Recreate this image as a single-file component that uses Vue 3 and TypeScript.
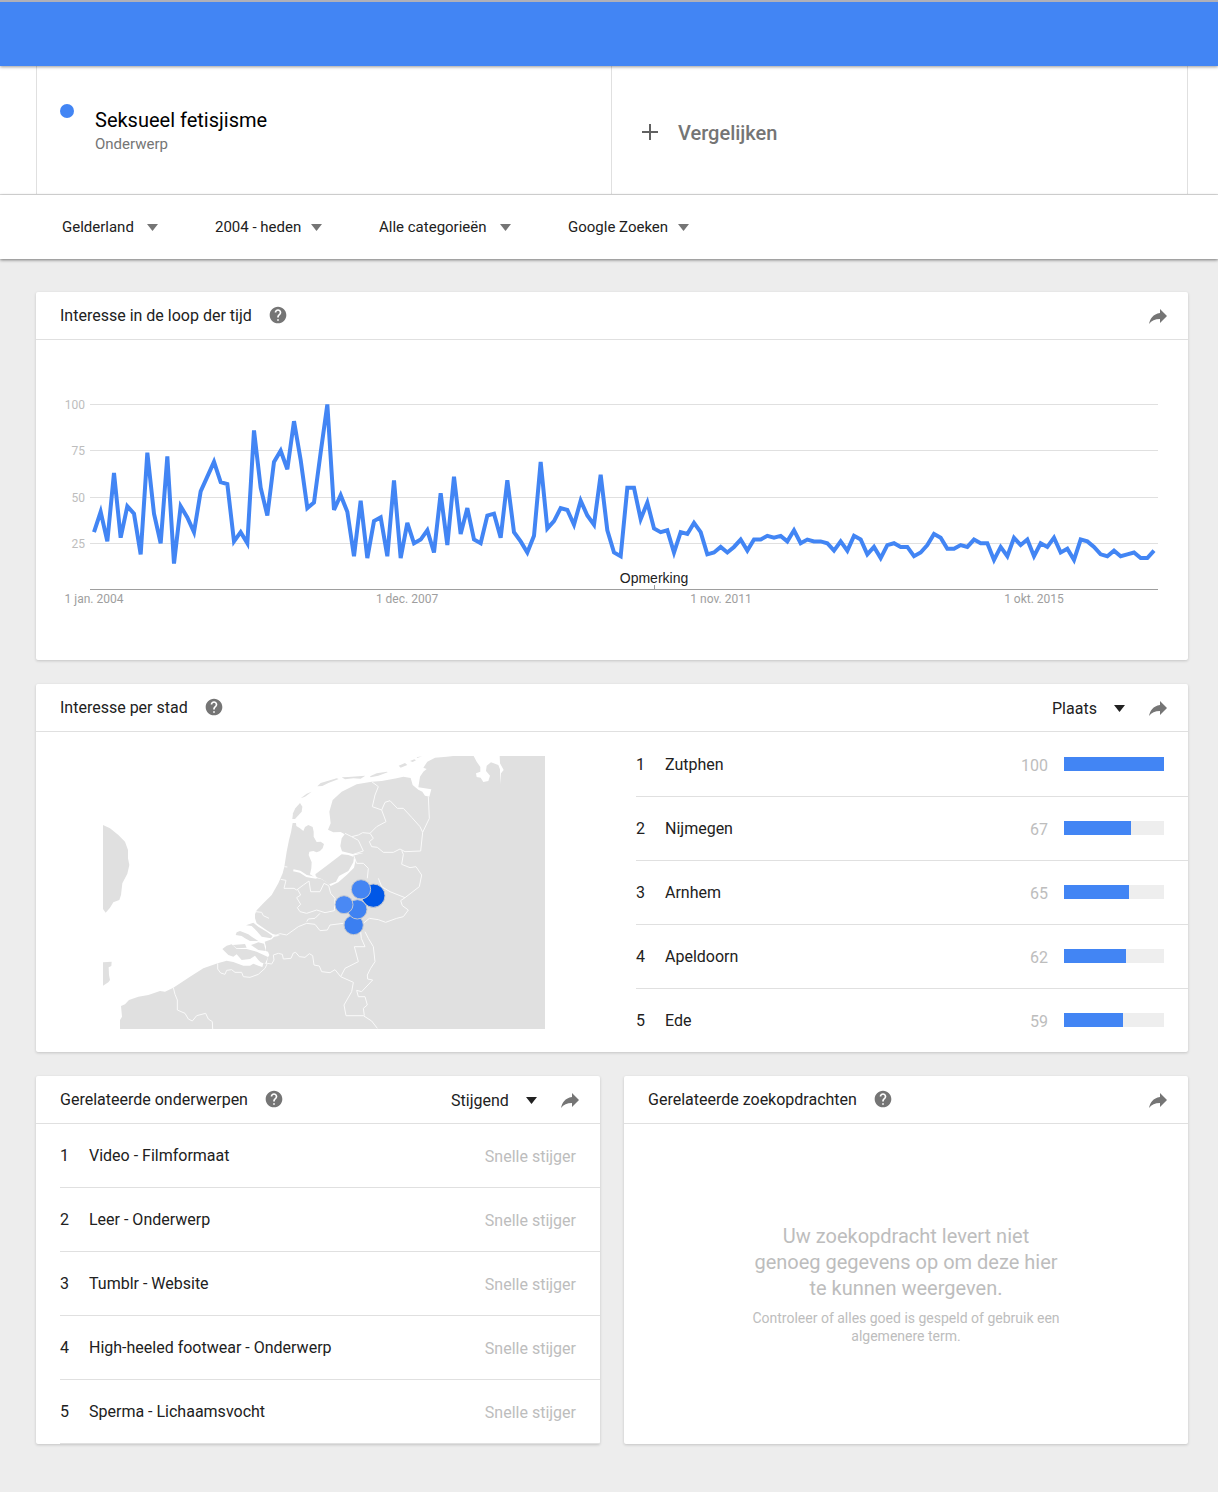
<script setup lang="ts">
interface Filter { name: string; value: string; wide: boolean }
interface Row { label: string; value: number }
interface Bubble { city: string; x: number; y: number; r: number; fill: string }

const filters: Filter[] = [
  { name: 'Regio', value: 'Gelderland', wide: true },
  { name: 'Periode', value: '2004 - heden', wide: false },
  { name: 'Categorie', value: 'Alle categorieën', wide: true },
  { name: 'Zoektype', value: 'Google Zoeken', wide: false },
]

const cities: Row[] = [
  { label: 'Zutphen', value: 100 },
  { label: 'Nijmegen', value: 67 },
  { label: 'Arnhem', value: 65 },
  { label: 'Apeldoorn', value: 62 },
  { label: 'Ede', value: 59 },
]

const topics: string[] = [
  'Video - Filmformaat',
  'Leer - Onderwerp',
  'Tumblr - Website',
  'High-heeled footwear - Onderwerp',
  'Sperma - Lichaamsvocht',
]

// Monthly interest, from January 2004
const interest: number[] = [
  31, 42, 26, 63, 28, 45, 41, 19, 74, 41, 25, 72, 14, 45, 39, 31, 53, 61, 69, 58,
  57, 26, 31, 25, 86, 55, 40, 69, 75, 65, 91, 70, 44, 47, 74, 100, 43, 51, 42, 18,
  48, 17, 37, 39, 18, 59, 17, 36, 25, 27, 32, 20, 52, 24, 61, 30, 44, 27, 25, 40,
  41, 28, 59, 31, 26, 20, 29, 69, 33, 37, 44, 43, 35, 48, 40, 35, 62, 32, 20, 18,
  55, 55, 38, 47, 33, 31, 32, 20, 31, 30, 36, 31, 19, 20, 23, 20, 23, 27, 21, 27,
  27, 29, 28, 29, 26, 32, 25, 27, 26, 26, 25, 21, 26, 21, 29, 27, 19, 23, 17, 24,
  25, 23, 23, 18, 20, 24, 30, 28, 22, 22, 24, 23, 27, 25, 25, 16, 23, 18, 28, 24,
  27, 18, 25, 23, 28, 20, 22, 16, 27, 26, 23, 19, 18, 21, 18, 19, 20, 17, 17, 21,
]
const points = interest
  .map((v, i) => `${(58 + (i * 20) / 3).toFixed(2)},${(249.5 - v * 1.85).toFixed(2)}`)
  .join(' ')

const gridLines = [
  { label: '100', y: 64 },
  { label: '75', y: 110 },
  { label: '50', y: 157 },
  { label: '25', y: 203 },
]
const dates = [
  { label: '1 jan. 2004', x: 58 },
  { label: '1 dec. 2007', x: 371 },
  { label: '1 nov. 2011', x: 685 },
  { label: '1 okt. 2015', x: 998 },
]

const bubbles: Bubble[] = [
  { city: 'Zutphen', x: 850, y: 452, r: 35, fill: '#0057e7' },
  { city: 'Nijmegen', x: 791, y: 540, r: 29, fill: '#3b7ff1' },
  { city: 'Arnhem', x: 802, y: 493, r: 29, fill: '#3f82f2' },
  { city: 'Apeldoorn', x: 813, y: 433, r: 29, fill: '#4485f3' },
  { city: 'Ede', x: 762, y: 479, r: 27, fill: '#4a89f4' },
]

const helpPath =
  'M12 2C6.48 2 2 6.48 2 12s4.48 10 10 10 10-4.48 10-10S17.52 2 12 2zm1 17h-2v-2h2v2zm2.07-7.75l-.9.92C13.45 12.9 13 13.5 13 15h-2v-.5c0-1.1.45-2.1 1.17-2.83l1.24-1.26c.37-.36.59-.86.59-1.41 0-1.1-.9-2-2-2s-2 .9-2 2H8c0-2.21 1.79-4 4-4s4 1.79 4 4c0 .88-.36 1.68-.93 2.25z'
const sharePath = 'M14 9V5l7 7-7 7v-4.1c-5 0-8.5 1.6-11 5.1 1-5 4-10 11-11z'
</script>

<template>
  <div class="page">
    <header class="app-bar"></header>

    <section class="terms">
      <div class="term">
        <span class="dot"></span>
        <div class="term-text">
          <h1>Seksueel fetisjisme</h1>
          <p>Onderwerp</p>
        </div>
      </div>
      <button type="button" class="term compare">
        <svg viewBox="0 0 24 24" aria-hidden="true"><path d="M20 13h-7v7h-2v-7H4v-2h7V4h2v7h7z" /></svg>
        <span>Vergelijken</span>
      </button>
    </section>

    <nav class="filters" aria-label="Filters">
      <label v-for="f in filters" :key="f.name" class="picker" :class="{ wide: f.wide }">
        <select :aria-label="f.name"><option>{{ f.value }}</option></select>
        <svg viewBox="0 0 11 7" aria-hidden="true"><path d="M0 0h11L5.500 7z" /></svg>
      </label>
    </nav>

    <main class="content">
      <section class="card">
        <div class="card-head">
          <h2>Interesse in de loop der tijd</h2>
          <button type="button" class="help" aria-label="Help"><svg viewBox="0 0 24 24"><path :d="helpPath" /></svg></button>
          <button type="button" class="share" aria-label="Delen"><svg viewBox="0 0 24 24"><path :d="sharePath" /></svg></button>
        </div>
        <svg class="chart" viewBox="0 0 1152 320" role="img" aria-label="Interesse in de loop der tijd">
          <g v-for="g in gridLines" :key="g.label">
            <rect class="grid" x="54" :y="g.y" width="1068" height="1" />
            <text class="axis-y" x="49" :y="g.y + 5">{{ g.label }}</text>
          </g>
          <rect class="base" x="54" y="249" width="1068" height="1" />
          <rect class="base" x="618" y="245" width="1" height="4" />
          <polyline :points="points" />
          <text class="note" x="618" y="243">Opmerking</text>
          <text v-for="d in dates" :key="d.label" class="axis-x" :x="d.x" y="263">{{ d.label }}</text>
        </svg>
      </section>

      <section class="card">
        <div class="card-head">
          <h2>Interesse per stad</h2>
          <button type="button" class="help" aria-label="Help"><svg viewBox="0 0 24 24"><path :d="helpPath" /></svg></button>
          <label class="picker dark">
            <select aria-label="Weergave"><option>Plaats</option></select>
            <svg viewBox="0 0 11 7" aria-hidden="true"><path d="M0 0h11L5.500 7z" /></svg>
          </label>
          <button type="button" class="share" aria-label="Delen"><svg viewBox="0 0 24 24"><path :d="sharePath" /></svg></button>
        </div>
        <div class="split">
          <div class="map-wrap">
            <svg class="map" viewBox="39 33 1326 819" role="img" aria-label="Kaart van Nederland">
              <g class="land">
                <path d="M90 852 90 825 96 815 93 783 105 778 117 765 145 755 175 750 210 738 225 740 250 728 300 695 340 670 383 655 410 647 430 651 460 662 480 662 490 656 505 662 517 666 520 655 530 657 533 638 538 630 534 620 527 618 528 605 524 590 545 583 552 575 570 572 548 567 530 556 515 545 500 535 495 520 495 508 500 496 520 475 545 450 565 415 578 385 583 365 590 320 597 285 603 262 608 234 618 234 619 243 630 250 640 258 645 246 655 240 668 246 671 260 671 275 680 291 692 290 702 297 698 310 690 318 680 322 670 318 658 320 656 330 665 352 664 370 660 388 676 398 695 403 715 415 722 423 745 412 770 390 792 368 797 345 788 332 820 324 788 327 756 319 751 303 755 280 764 268 752 261 730 262 714 254 722 235 718 200 728 165 755 140 800 118 845 110 875 108 920 100 940 95 962 99 968 120 985 134 997 140 1005 152 1018 155 1024 133 985 127 990 95 1000 80 1010 72 1000 68 1012 50 1035 38 1070 35 1090 33 1151 33 1160 50 1171 66 1171 80 1158 85 1160 96 1172 98 1180 111 1195 108 1200 92 1188 78 1190 62 1203 52 1225 60 1230 73 1231 118 1233 85 1241 75 1230 55 1229 33 1365 33 1365 852Z" />
                <path d="M39 240 60 250 85 270 105 290 114 315 114 340 118 360 112 386 97 415 93 450 88 465 70 472 60 488 47 503 39 492Z" />
                <path d="M39 652 65 650 64 663 56 667 57 690 60 705 55 712 39 722Z" />
                <path d="M609 205 616 190 630 174 637 185 635 200 615 222 607 222Z" />
                <path d="M632 160 650 146 665 140 645 155Z" />
                <path d="M682 124 692 114 720 106 740 100 746 102 715 114 697 123Z" />
                <path d="M755 97 775 96 826 92 812 101 790 100 765 103Z" />
                <path d="M840 94 860 85 891 80 893 82 865 92 842 97Z" />
                <path d="M926 62 945 54 952 60 932 68ZM960 48 973 43 978 46 968 51ZM980 37 996 34 982 39Z" />
                <path d="M676 388 710 362 755 328 775 330 792 336 790 352 775 378 747 393 738 410 718 418 695 402 678 396Z" />
                <path d="M468 541 490 533 505 545 530 560 548 573 543 580 515 575 500 558 485 543Z" />
                <path d="M437 570 440 562 450 558 475 568 485 575 505 588 480 588 465 580 455 573Z" />
                <path d="M428 600 465 597 470 608 440 610Z" />
                <path d="M397 612 410 602 425 598 440 612 470 612 500 620 534 636 525 657 512 652 505 645 495 632 480 642 455 645 440 628 430 635 415 630Z" />
                <path d="M483 600 505 592 522 596 527 618 505 615Z" />
              </g>
              <g class="borders">
                <path d="M383 655 383 672 392 684 405 688 410 676 425 674 435 682 455 682 460 695 480 697 505 688 525 670 532 655 545 657 552 645 550 630 565 625 577 628 580 642 603 640 610 624 617 622 628 635 645 637 658 626 668 632 672 660 688 663 695 680 720 683 735 674 752 695 790 712 785 740 762 780 768 812 820 812 845 828 862 850" />
                <path d="M250 728 255 748 262 765 262 795 285 805 295 822 307 828 320 812 347 805 355 822 367 830 368 852" />
                <path d="M572 403 588 406 582 430 612 430 620 435 640 420 657 408 662 440 690 440 702 415 716 422 722 445 735 460 733 497 705 503 680 495 650 505 630 500 622 488 632 478 620 458 632 450 622 432" />
                <path d="M552 573 570 566 590 570 625 545 650 535 675 538 690 557 712 555 720 540 760 535M650 530 655 522 675 520 690 505M497 500 515 502 520 512 537 520M583 365 592 366" />
                <path d="M845 110 865 125 855 150 847 185 875 195 888 230 860 245 840 265 818 263 805 270 785 275 765 265" />
                <path d="M875 195 885 172 900 167 922 190 940 190 965 217 990 245 998 262 1018 220 1015 155" />
                <path d="M840 265 850 280 838 290 845 305 862 307 880 322 910 322 930 312 945 320 992 318 998 262" />
                <path d="M935 316 940 328 935 358 960 368 978 365 995 390 988 425 945 458 900 440 875 425 865 400" />
                <path d="M785 275 805 286 820 318 790 328 800 355 820 355 835 370 832 400" />
                <path d="M945 458 932 467 937 482 955 495 940 515 920 520 887 532 865 524 838 520 820 535" />
                <path d="M812 560 814 580 825 605 793 605 805 650 765 670 752 695M825 560 835 580 850 605 855 650 842 670 832 690 833 702 848 705 815 740 800 736 805 755 825 755 832 780 820 790 823 812" />
              </g>
              <path class="water" d="M610 376 630 380 650 393 665 396 680 398" />
              <circle v-for="b in bubbles" :key="b.city" :cx="b.x" :cy="b.y" :r="b.r" :fill="b.fill" />
            </svg>
          </div>
          <ol class="list cities">
            <li v-for="(c, i) in cities" :key="c.label">
              <span class="rank">{{ i + 1 }}</span>
              <span class="name">{{ c.label }}</span>
              <span class="value">{{ c.value }}</span>
              <span class="bar"><span class="fill" :style="{ width: c.value + '%' }"></span></span>
            </li>
          </ol>
        </div>
      </section>

      <div class="pair">
        <section class="card">
          <div class="card-head">
            <h2>Gerelateerde onderwerpen</h2>
            <button type="button" class="help" aria-label="Help"><svg viewBox="0 0 24 24"><path :d="helpPath" /></svg></button>
            <label class="picker dark">
              <select aria-label="Sortering"><option>Stijgend</option></select>
              <svg viewBox="0 0 11 7" aria-hidden="true"><path d="M0 0h11L5.500 7z" /></svg>
            </label>
            <button type="button" class="share" aria-label="Delen"><svg viewBox="0 0 24 24"><path :d="sharePath" /></svg></button>
          </div>
          <ol class="list topics">
            <li v-for="(t, i) in topics" :key="t">
              <span class="rank">{{ i + 1 }}</span>
              <span class="name">{{ t }}</span>
              <span class="value">Snelle stijger</span>
            </li>
          </ol>
        </section>

        <section class="card">
          <div class="card-head">
            <h2>Gerelateerde zoekopdrachten</h2>
            <button type="button" class="help" aria-label="Help"><svg viewBox="0 0 24 24"><path :d="helpPath" /></svg></button>
            <button type="button" class="share" aria-label="Delen"><svg viewBox="0 0 24 24"><path :d="sharePath" /></svg></button>
          </div>
          <div class="empty">
            <p class="empty-title">Uw zoekopdracht levert niet genoeg gegevens op om deze hier te kunnen weergeven.</p>
            <p class="empty-hint">Controleer of alles goed is gespeld of gebruik een algemenere term.</p>
          </div>
        </section>
      </div>
    </main>
  </div>
</template>

<style>
body {
  background: #ededed;
}
</style>

<style scoped>
.page {
  font-family: Roboto, "Liberation Sans", sans-serif;
  color: #212121;
  font-size: 16px;
}
h1, h2, p, ol {
  margin: 0;
  padding: 0;
  font-weight: 400;
}
button, select {
  font: inherit;
  color: inherit;
  background: none;
  border: 0;
  padding: 0;
  margin: 0;
  cursor: pointer;
}
svg {
  display: block;
}
.app-bar {
  position: relative;
  box-sizing: border-box;
  height: 66px;
  background: #4285f4;
  border-top: 2px solid #b0b0b8;
  box-shadow: 0 1px 3px rgba(0, 0, 0, 0.4);
}
.terms {
  display: grid;
  grid-template-columns: 1fr 1fr;
  height: 128px;
  padding: 0 30px 0 36px;
  background: #fff;
  border-bottom: 1px solid #e0e0e0;
}
.term {
  display: flex;
  align-items: flex-start;
  box-sizing: border-box;
  padding: 38px 24px 0 23px;
  border-left: 1px solid #e0e0e0;
  text-align: left;
}
.dot {
  width: 14px;
  height: 14px;
  margin-right: 21px;
  border-radius: 50%;
  background: #4285f4;
}
.term-text {
  padding-top: 4px;
}
h1 {
  font-size: 20px;
  line-height: 24px;
  color: #000;
}
.term-text p {
  font-size: 15px;
  line-height: 24px;
  color: #757575;
}
.compare {
  align-items: center;
  gap: 16px;
  margin-left: -1px;
  padding: 4px 24px 0 26px;
  border-right: 1px solid #e0e0e0;
  color: #757575;
  font-size: 20px;
  font-weight: 500;
}
.compare span {
  padding-top: 2px;
}
.compare svg {
  width: 24px;
  height: 24px;
  fill: #616161;
}
.filters {
  position: relative;
  display: flex;
  align-items: center;
  gap: 57px;
  height: 64px;
  padding: 0 62px;
  background: #fff;
  box-shadow: 0 1px 3px rgba(0, 0, 0, 0.5);
  font-size: 15px;
}
.picker {
  display: flex;
  align-items: center;
  gap: 9px;
}
.picker.wide {
  gap: 13px;
}
.picker select {
  appearance: none;
  line-height: 24px;
}
.picker svg {
  width: 11px;
  height: 7px;
  fill: #757575;
}
.picker.dark {
  gap: 17px;
  margin: 3px 21px 0 auto;
}
.picker.dark svg {
  margin-bottom: 1px;
  fill: #212121;
}
.content {
  display: flex;
  flex-direction: column;
  gap: 24px;
  padding: 33px 30px 48px 36px;
}
.card {
  background: #fff;
  border-radius: 2px;
  box-shadow: 0 1px 3px rgba(0, 0, 0, 0.18);
}
.card-head {
  display: flex;
  align-items: center;
  box-sizing: border-box;
  height: 48px;
  padding: 0 18px 0 24px;
  border-bottom: 1px solid #e0e0e0;
}
.help {
  margin: 0 0 1px 16px;
}
.help svg {
  width: 20px;
  height: 20px;
  fill: #757575;
}
.share svg {
  width: 24px;
  height: 24px;
  fill: #757575;
}
.help + .share {
  margin-left: auto;
}
h2 {
  padding-top: 1px;
  font-size: 16px;
  line-height: 24px;
}
.chart {
  width: 100%;
}
.chart polyline {
  fill: none;
  stroke: #4285f4;
  stroke-width: 4;
}
.grid {
  fill: #e0e0e0;
}
.base {
  fill: #9e9e9e;
}
.axis-y {
  font-size: 12px;
  text-anchor: end;
  fill: #bdbdbd;
}
.axis-x {
  font-size: 12px;
  text-anchor: middle;
  fill: #9e9e9e;
}
.note {
  font-family: "Liberation Sans", Arial, sans-serif;
  font-size: 14px;
  text-anchor: middle;
  fill: #222;
}
.split, .pair {
  display: grid;
  grid-template-columns: 1fr 1fr;
}
.pair {
  gap: 24px;
}
.map-wrap {
  padding: 24px 67px 23px;
}
.map {
  width: 100%;
}
.land {
  fill: #e0e0e0;
}
.borders {
  fill: none;
  stroke: #fafafa;
  stroke-width: 3;
  stroke-linejoin: round;
}
.water {
  fill: none;
  stroke: #fff;
  stroke-width: 6;
}
.map circle {
  stroke: #c4c8d0;
  stroke-width: 3;
}
.list {
  list-style: none;
  margin-left: 24px;
}
.list li {
  display: flex;
  align-items: center;
  box-sizing: border-box;
  height: 64px;
  padding-right: 24px;
  line-height: 24px;
}
.cities li {
  border-top: 1px solid #e0e0e0;
}
.cities li:first-child {
  border-top-color: transparent;
}
.topics li {
  border-bottom: 1px solid #e0e0e0;
}
.rank {
  width: 29px;
}
.name {
  flex: 1;
}
.value {
  padding-top: 2px;
  color: #bdbdbd;
}
.bar {
  width: 100px;
  height: 14px;
  margin: 0 0 1px 16px;
  background: #eee;
}
.fill {
  display: block;
  height: 100%;
  background: #4285f4;
}
.empty {
  display: flex;
  flex-direction: column;
  align-items: center;
  justify-content: center;
  gap: 8px;
  height: 320px;
  text-align: center;
  color: #bdbdbd;
}
.empty p {
  width: 312px;
}
.empty-title {
  font-size: 20px;
  line-height: 26px;
}
.empty-hint {
  font-size: 14px;
  line-height: 18px;
}
</style>
